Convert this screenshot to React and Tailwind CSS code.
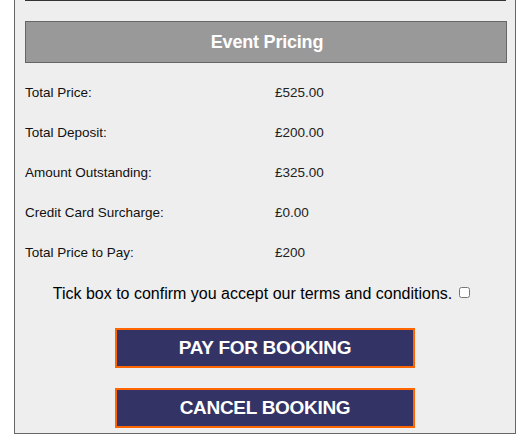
import { useState } from 'react'

const rows = [
  { label: 'Total Price:', value: '£525.00' },
  { label: 'Total Deposit:', value: '£200.00' },
  { label: 'Amount Outstanding:', value: '£325.00' },
  { label: 'Credit Card Surcharge:', value: '£0.00' },
  { label: 'Total Price to Pay:', value: '£200' },
]

export default function App() {
  const [agreed, setAgreed] = useState(false)

  return (
    <div className="min-h-screen bg-white font-['Liberation_Sans',Arial,sans-serif] text-black">
      <div className="ml-[14px] w-[502px] h-[434px] border border-t-0 border-[#666] bg-[#eeeeee] flex flex-col">
        <div className="mx-[10px] mr-[9px] h-[1px] bg-[#333]" />

        <div className="mt-[20px] ml-[10px] w-[482px] h-[42px] border border-[#666] bg-[#999999] flex items-center justify-center">
          <span className="text-white text-[18px] font-bold tracking-[-0.2px] pl-[2px]">Event Pricing</span>
        </div>

        <div className="mt-[10px] ml-[10px] flex flex-col">
          {rows.map(r => (
            <div key={r.label} className="h-[40px] flex items-center text-[13.5px]">
              <span className="w-[250px] text-[#111]">{r.label}</span>
              <span className="text-[#222]">{r.value}</span>
            </div>
          ))}
        </div>

        <label className="mt-[1px] h-[40px] flex items-center justify-center gap-[7px] text-[16px] pr-[7px]">
          <span>Tick box to confirm you accept our terms and conditions.</span>
          <input
            type="checkbox"
            checked={agreed}
            onChange={e => setAgreed(e.target.checked)}
            className="w-[11px] h-[11px] -mt-[3px] accent-[#333366]"
          />
        </label>

        <div className="mt-[14px] flex flex-col items-center gap-[20px]">
          <button className="w-[300px] h-[40px] border-2 border-[#ff6600] bg-[#333366] text-white text-[19px] font-bold tracking-[-0.3px]">
            PAY FOR BOOKING
          </button>
          <button className="w-[300px] h-[40px] border-2 border-[#ff6600] bg-[#333366] text-white text-[19px] font-bold tracking-[-0.3px]">
            CANCEL BOOKING
          </button>
        </div>
      </div>
    </div>
  )
}
